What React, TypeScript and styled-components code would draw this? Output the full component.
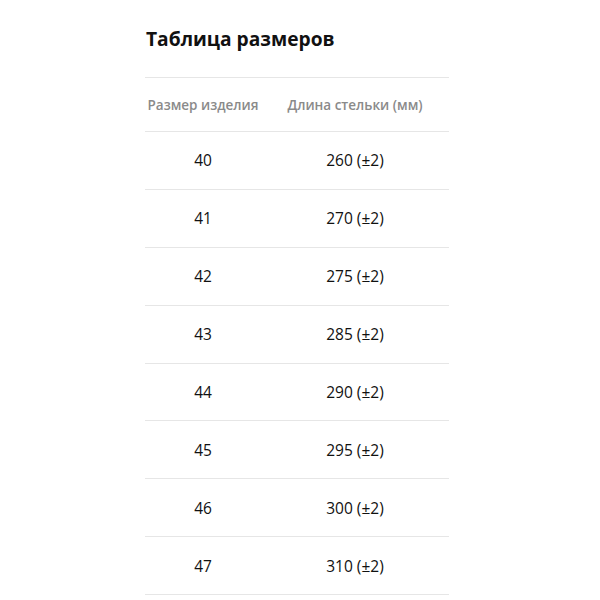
import React from 'react';
import styled, { createGlobalStyle } from 'styled-components';

const GlobalStyle = createGlobalStyle`
  body {
    margin: 0;
    background: #ffffff;
    font-family: "Open Sans", Lato, sans-serif;
  }
`;

const Root = styled.div`
  width: 304px;
  padding: 26px 0 0 145px;
`;

const Title = styled.h2`
  margin: 0 0 26px 1px;
  font-size: 19.2px;
  line-height: 25px;
  font-weight: 700;
  color: #111111;
`;

const Table = styled.div`
  display: grid;
  grid-template-columns: 116px 188px;
  border-top: 1px solid #e6e6e6;
`;

const HeadCell = styled.div`
  height: 53px;
  display: flex;
  align-items: center;
  justify-content: center;
  border-bottom: 1px solid #e6e6e6;
  font-size: 13.5px;
  font-weight: 600;
  color: #8a8a8a;
  white-space: nowrap;
`;

const Cell = styled.div`
  height: 56.9px;
  display: flex;
  align-items: center;
  justify-content: center;
  border-bottom: 1px solid #e6e6e6;
  font-size: 15.5px;
  font-weight: 500;
  color: #111111;
`;

const ROWS = [
  { size: 40, length: 260 },
  { size: 41, length: 270 },
  { size: 42, length: 275 },
  { size: 43, length: 285 },
  { size: 44, length: 290 },
  { size: 45, length: 295 },
  { size: 46, length: 300 },
  { size: 47, length: 310 },
];

export default function App() {
  return (
    <>
      <GlobalStyle />
      <Root>
        <Title>Таблица размеров</Title>
        <Table>
          <HeadCell>Размер изделия</HeadCell>
          <HeadCell>Длина стельки (мм)</HeadCell>
          {ROWS.map((row) => (
            <React.Fragment key={row.size}>
              <Cell>{row.size}</Cell>
              <Cell>{row.length} (±2)</Cell>
            </React.Fragment>
          ))}
        </Table>
      </Root>
    </>
  );
}
